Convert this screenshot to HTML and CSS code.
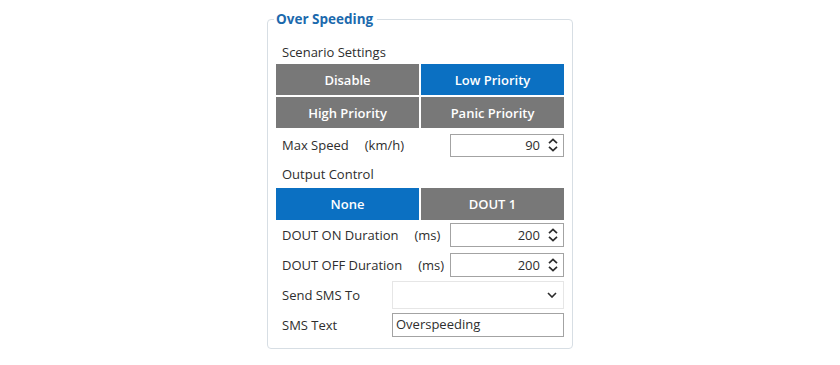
FILE: index.html
```html
<!DOCTYPE html>
<html lang="en">
<head>
<meta charset="utf-8">
<title>Over Speeding</title>
<link rel="stylesheet" href="styles.css">
</head>
<body>
<fieldset class="group">
  <legend class="group-title">Over Speeding</legend>

  <div class="section-label">Scenario Settings</div>
  <div class="toggle-grid">
    <div class="toggle">Disable</div>
    <div class="toggle active">Low Priority</div>
    <div class="toggle">High Priority</div>
    <div class="toggle">Panic Priority</div>
  </div>

  <div class="field-row speed-row">
    <span class="field-name">Max Speed</span><span class="field-unit">(km/h)</span>
    <div class="spin-box spin-narrow">
      <span class="spin-value">90</span>
      <svg class="spin-icon" width="12" height="16" viewBox="0 0 12 16"><path d="M2 6.2 L6 2.4 L10 6.2 M2 9.8 L6 13.6 L10 9.8" fill="none" stroke="#2b2b2b" stroke-width="1.7"/></svg>
    </div>
  </div>

  <div class="section-label output-label">Output Control</div>
  <div class="toggle-grid single">
    <div class="toggle active">None</div>
    <div class="toggle">DOUT 1</div>
  </div>

  <div class="field-row">
    <span class="field-name">DOUT ON Duration</span><span class="field-unit">(ms)</span>
    <div class="spin-box spin-narrow">
      <span class="spin-value">200</span>
      <svg class="spin-icon" width="12" height="16" viewBox="0 0 12 16"><path d="M2 6.2 L6 2.4 L10 6.2 M2 9.8 L6 13.6 L10 9.8" fill="none" stroke="#2b2b2b" stroke-width="1.7"/></svg>
    </div>
  </div>

  <div class="field-row">
    <span class="field-name">DOUT OFF Duration</span><span class="field-unit">(ms)</span>
    <div class="spin-box spin-narrow">
      <span class="spin-value">200</span>
      <svg class="spin-icon" width="12" height="16" viewBox="0 0 12 16"><path d="M2 6.2 L6 2.4 L10 6.2 M2 9.8 L6 13.6 L10 9.8" fill="none" stroke="#2b2b2b" stroke-width="1.7"/></svg>
    </div>
  </div>

  <div class="field-row">
    <span class="field-name">Send SMS To</span>
    <div class="combo">
      <svg class="combo-icon" width="10" height="6" viewBox="0 0 10 6"><path d="M1 1 L5 5 L9 1" fill="none" stroke="#2b2b2b" stroke-width="1.6"/></svg>
    </div>
  </div>

  <div class="field-row">
    <span class="field-name">SMS Text</span>
    <div class="text-box">Overspeeding</div>
  </div>
</fieldset>
</body>
</html>
```

FILE: styles.css
```css
html, body {
  margin: 0;
  padding: 0;
  background: #ffffff;
}

body {
  font-family: "Open Sans", "Noto Sans", sans-serif;
  font-size: 13px;
  color: #2e2e2e;
  padding-top: 10px;
}

.group {
  box-sizing: border-box;
  width: 306px;
  margin: 0 auto;
  padding: 12px 8px 8px 8px;
  border: 1px solid #d7dee4;
  border-radius: 4px;
  min-inline-size: 0;
}

.group-title {
  font-weight: 700;
  font-size: 13.5px;
  line-height: 18px;
  color: #1b69ad;
  padding: 0 4px 0 2px;
  margin-left: -2px;
}

.section-label {
  height: 24px;
  line-height: 24px;
  padding-left: 6px;
}

.output-label {
  height: 28px;
  line-height: 28px;
}

.toggle-grid {
  display: grid;
  grid-template-columns: 1fr 1fr;
  grid-auto-rows: 31px;
  column-gap: 2px;
  row-gap: 2px;
}

.toggle-grid.single {
  grid-auto-rows: 32px;
}

.toggle {
  background: #787878;
  color: #ffffff;
  font-weight: 600;
  display: flex;
  align-items: center;
  justify-content: center;
}

.toggle.active {
  background: #0b70c2;
}

.field-row {
  display: flex;
  align-items: center;
  height: 30px;
  padding-left: 6px;
}

.speed-row {
  margin-top: 2px;
}

.field-unit {
  margin-left: 16px;
}

.spin-box {
  box-sizing: border-box;
  margin-left: auto;
  width: 114px;
  height: 24px;
  border: 1px solid #a3a3a3;
  background: #ffffff;
  display: flex;
  align-items: center;
  justify-content: flex-end;
  padding-right: 4px;
}

.speed-row .spin-box {
  height: 23px;
}

.spin-value {
  margin-right: 7px;
}

.spin-icon {
  display: block;
}

.combo {
  box-sizing: border-box;
  margin-left: auto;
  width: 172px;
  height: 28px;
  border: 1px solid #e6e6e6;
  background: #ffffff;
  display: flex;
  align-items: center;
  justify-content: flex-end;
  padding-right: 6px;
}

.combo-icon {
  display: block;
}

.text-box {
  box-sizing: border-box;
  margin-left: auto;
  width: 172px;
  height: 24px;
  line-height: 20px;
  border: 1px solid #a3a3a3;
  padding-left: 3px;
  background: #ffffff;
}
```
